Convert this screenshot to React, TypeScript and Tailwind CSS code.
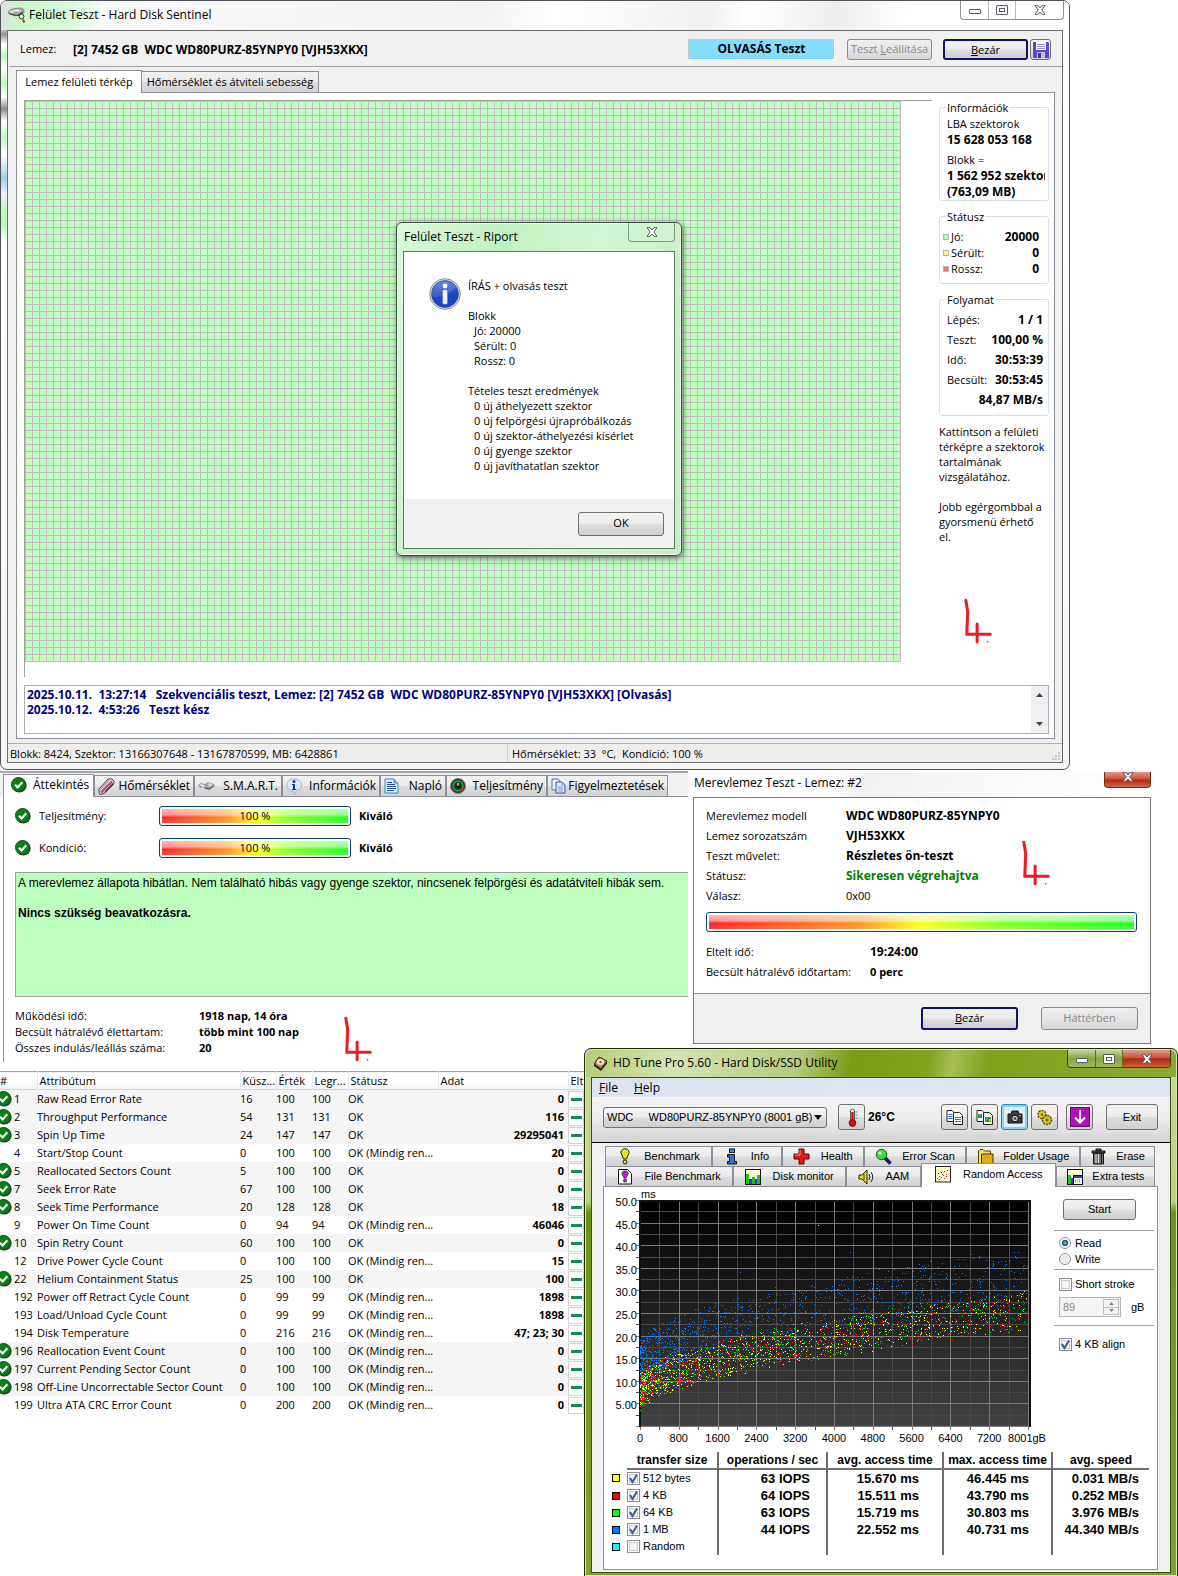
import { useState } from 'react';
import type { ReactNode } from 'react';

const face = 'border border-[#707070] rounded-[3px] bg-[linear-gradient(#f3f3f3,#ebebeb_48%,#dddddd_52%,#cfcfcf)]';
const defaultFace = 'border-2 border-[#10106e] rounded-[3px] bg-[linear-gradient(#f3f3f3,#ebebeb_48%,#dddddd_52%,#cfcfcf)]';
const disabledFace = 'border border-[#8a8a8a] rounded-[3px] bg-[linear-gradient(#f0f0f0,#e4e4e4_50%,#d6d6d6)] text-[#8a8a8a]';
const tabFace = 'border border-[#8c8e99] bg-[linear-gradient(#f2f2f2,#ebebeb_48%,#dddddd_52%,#d2d2d2)]';

/* ---------- icons ---------- */

const CheckIcon = () => (
    <svg className="w-[16px] h-[16px] shrink-0" viewBox="0 0 17 17">
        <circle cx="9" cy="9" r="7.6" fill="#3a3a3a" />
        <circle cx="8" cy="8" r="7.5" fill="#0a8018" stroke="#064d0c" strokeWidth="1" />
        <path d="M4.2 8.2l2.8 3 5-5.6" fill="none" stroke="#fff" strokeWidth="2.2" />
    </svg>
);

const DriveIcon = () => (
    <svg className="w-[18px] h-[16px] shrink-0" viewBox="0 0 18 16">
        <path d="M0 5l2-2 4-1.500 7-.5 3 1.500v3L12 8l-5 1-3-1.500L1 7z" fill="#a8a8a8" stroke="#666" strokeWidth="0.600" />
        <path d="M1 6l4 1 4 1 6-3.500V6l-4 3H7L2 7.500z" fill="#4c4c4c" />
        <ellipse cx="9" cy="3.600" rx="4" ry="1.500" fill="#f0f0f0" stroke="#888" strokeWidth="0.500" />
        <ellipse cx="4" cy="4.800" rx="2.500" ry="1.200" fill="#dedede" />
        <circle cx="13.500" cy="9.500" r="2.400" fill="#dfeaf2" stroke="#333" />
        <path d="M14.500 11.500l1.500 3.500" stroke="#b27a22" strokeWidth="2.200" />
        <path d="M16 14v1.500" stroke="#222" strokeWidth="1.500" />
    </svg>
);

const TabDriveIcon = () => (
    <svg className="w-[17px] h-[10px] shrink-0" viewBox="0 0 17 10">
        <path d="M0 4l3-2 4 1 3-2 6 2 1 2-5 4-5-1-2-2-3 1z" fill="#9c9c9c" />
        <path d="M1 4l2-1 3 1 2 1-3 1z" fill="#e8e8e8" />
        <path d="M9 3l3-1 3 2-3 2z" fill="#dcdcdc" />
        <path d="M7 7l4 1 4-3" stroke="#555" fill="none" />
    </svg>
);

const ThermoTabIcon = () => (
    <svg className="w-[17px] h-[17px] shrink-0" viewBox="0 0 17 17">
        <path d="M1 11L10 1h4l2 2v3L7 15l-5 1.500-1-2z" fill="#d8d8dc" stroke="#444" strokeWidth="1" />
        <path d="M3 14.500L14 3.500" stroke="#d0408a" strokeWidth="2.400" />
        <path d="M7 14l8-8.500" stroke="#55404c" strokeWidth="1.200" />
        <path d="M2.500 11.500L11 2.500" stroke="#8a8a90" strokeWidth="1" />
    </svg>
);

const InfoBubbleIcon = () => (
    <svg className="w-[17px] h-[17px] shrink-0" viewBox="0 0 17 17">
        <path d="M8 1c4.500 0 7.500 2.500 7.500 6 0 3-2 4.700-4.500 5.300L8.500 16 7 12.800C3 12.500.8 10 .8 7 .8 3.500 3.700 1 8 1z" fill="#dcebf7" stroke="#9db6cc" />
        <circle cx="8" cy="3.600" r="1.500" fill="#1238a8" />
        <path d="M6 6h3v5h1.200v1H6v-1h1V7H6z" fill="#1238a8" />
    </svg>
);

const LogIcon = () => (
    <svg className="w-[15px] h-[16px] shrink-0" viewBox="0 0 15 16">
        <path d="M1 1h9l4 4v10H1z" fill="#d9efff" stroke="#2b8be0" />
        <path d="M10 1v4h4" fill="#7cc0f5" stroke="#2b8be0" />
        <path d="M3 4.500h5M3 6.500h8M3 8.500h9M3 10.500h9M3 12.500h7" stroke="#23509c" />
    </svg>
);

const GaugeIcon = () => (
    <svg className="w-[16px] h-[16px] shrink-0" viewBox="0 0 16 16">
        <circle cx="8" cy="8" r="7.500" fill="#333" stroke="#7b7b7b" />
        <circle cx="8" cy="8" r="4.800" fill="#0d3d14" stroke="#1fae3a" strokeWidth="1.600" />
        <path d="M8 10V5" stroke="#fff" strokeWidth="1.200" />
        <circle cx="8" cy="9" r="1.600" fill="#000" />
        <path d="M10 12l4-3-1.500 4z" fill="#f22" />
    </svg>
);

const PagesIcon = () => (
    <svg className="w-[15px] h-[16px] shrink-0" viewBox="0 0 15 16">
        <path d="M1 1h6l2 2v9H1z" fill="#eaf2ff" stroke="#5a6fa5" />
        <path d="M5 4h6l3 3v8H5z" fill="#dbe9ff" stroke="#3f5698" />
        <path d="M11 4v3h3M7 9h5M7 11h5M7 13h5" fill="none" stroke="#7da0e0" />
    </svg>
);

const FloppyIcon = () => (
    <svg className="w-[16px] h-[16px] shrink-0" viewBox="0 0 16 16">
        <path d="M0 0h15l1 1v15H1l-1-1z" fill="#5b48c8" />
        <path d="M3 0h10v8H3z" fill="#fff" />
        <path d="M4 2.500h8M4 4.500h8M4 6.500h8" stroke="#9b92d8" />
        <path d="M4 10h8v6H4z" fill="#c3bdea" />
        <path d="M5 11h3v5H5z" fill="#4331a5" />
    </svg>
);

const InfoIcon = () => (
    <svg className="w-[32px] h-[32px] shrink-0" viewBox="0 0 32 32">
        <defs>
            <linearGradient id="infoBlue" x1="0" y1="0" x2="0" y2="1">
                <stop offset="0" stopColor="#4a78dc" />
                <stop offset="0.5" stopColor="#1d45bb" />
                <stop offset="1" stopColor="#1848d2" />
            </linearGradient>
        </defs>
        <circle cx="16" cy="16" r="15.300" fill="#e4e4e4" stroke="#8b8b8b" />
        <circle cx="16" cy="16" r="13.500" fill="url(#infoBlue)" stroke="#24408f" strokeWidth="0.600" />
        <path d="M2.800 18C8 20 20 18 27 9A13.500 13.500 0 0 0 2.800 18z" fill="#fff" opacity="0.150" />
        <circle cx="16" cy="8" r="2.400" fill="#fff" />
        <rect x="13.800" y="12" width="4.400" height="14" rx="1" fill="#f2f2f2" stroke="#bbb" strokeWidth="0.500" />
    </svg>
);

const TuneLogo = () => (
    <svg className="w-[15px] h-[15px] shrink-0" viewBox="0 0 15 15">
        <path d="M1 8L6 1l8 4-6 8z" fill="#b98250" stroke="#3a2a1c" />
        <path d="M1 8l7 5 6-8v2.500L8 15 1 10z" fill="#2a2320" />
        <ellipse cx="7.500" cy="6" rx="3.600" ry="3" fill="#f4e3cf" />
        <circle cx="7.500" cy="6" r="1.200" fill="#8a5a2c" />
    </svg>
);

const CloseGlyph = ({ fill = '#fff' }: { fill?: string }) => (
    <svg className="w-[12px] h-[10px]" viewBox="0 0 12 10">
        <path d="M1 .7h3L6 3 8 .7h3L7.800 5 11 9.300H8L6 7 4 9.300H1L4.200 5z" fill={fill} stroke="#555b66" strokeWidth="1" />
    </svg>
);

const MinGlyph = () => (
    <svg className="w-[12px] h-[6px] mt-[4px]" viewBox="0 0 12 6"><rect x="0.500" y="0.500" width="11" height="4" rx="0.500" fill="#fff" stroke="#555b66" /></svg>
);

const MaxGlyph = () => (
    <svg className="w-[12px] h-[10px]" viewBox="0 0 12 10">
        <rect x="0.500" y="0.500" width="11" height="9" rx="0.500" fill="#fff" stroke="#555b66" />
        <rect x="3.500" y="3.500" width="5" height="3" fill="#fff" stroke="#555b66" />
    </svg>
);

const BulbIcon = () => (
    <svg className="w-[16px] h-[17px]" viewBox="0 0 16 17">
        <path d="M8 .7c2.500 0 4 1.500 4 3.500S10 9 9.500 11h-3C6 9 4 6.200 4 4.200S5.500.7 8 .7z" fill="#e6e21c" stroke="#222" />
        <path d="M6.500 3.500l1-1" stroke="#fff" />
        <circle cx="8" cy="14" r="2" fill="#e6e21c" stroke="#222" />
    </svg>
);

const LetterIIcon = () => (
    <svg className="w-[14px] h-[17px]" viewBox="0 0 14 17">
        <rect x="4.500" y="1" width="5" height="3.500" fill="#2f8be6" stroke="#111" />
        <path d="M2.500 6.500h7v7h2v2.500h-9v-2.500h2v-4.500h-2z" fill="#1e7ae0" stroke="#111" />
    </svg>
);

const CrossIcon = () => (
    <svg className="w-[17px] h-[17px]" viewBox="0 0 17 17">
        <path d="M6 1h5v5h5v5h-5v5H6v-5H1V6h5z" fill="#e01818" stroke="#5c0505" />
        <path d="M7 2v5H2" stroke="#ff8a8a" fill="none" />
    </svg>
);

const LensIcon = () => (
    <svg className="w-[17px] h-[17px]" viewBox="0 0 17 17">
        <path d="M9.500 9.500l6 6" stroke="#0a1270" strokeWidth="3.500" />
        <circle cx="6.500" cy="6.500" r="5.200" fill="#3fdc3f" stroke="#155c15" />
        <circle cx="5" cy="5" r="1.500" fill="#d8ffd8" />
    </svg>
);

const FolderIcon = () => (
    <svg className="w-[17px] h-[17px]" viewBox="0 0 17 17">
        <path d="M1.500 3V15.500h12V3h-6L6 1.500H3z" fill="#f5e169" stroke="#4a3c05" />
        <path d="M4.500 6h11.500v9.500H4.500z" fill="#dcae1a" stroke="#4a3c05" />
    </svg>
);

const TrashIcon = () => (
    <svg className="w-[17px] h-[17px]" viewBox="0 0 17 17">
        <path d="M2 3h13v2H2zM6 1h5v2H6zM3.500 5h10v11h-10z" fill="#6f6f6f" stroke="#111" />
        <path d="M6 6v9M8.500 6v9" stroke="#ddd" /><path d="M11.500 6v9" stroke="#222" />
    </svg>
);

const FileBulbIcon = () => (
    <svg className="w-[16px] h-[17px]" viewBox="0 0 16 17">
        <path d="M1.500 1.500h9l4 4v10.500h-13z" fill="#fff" stroke="#111" />
        <path d="M8 3c2 0 3 1 3 2.500S9.500 8.500 9 10H7C6.500 8.500 5 7 5 5.500S6 3 8 3z" fill="#c020d0" stroke="#222" strokeWidth="0.800" />
        <circle cx="8" cy="12.500" r="1.600" fill="#c020d0" stroke="#222" strokeWidth="0.800" />
    </svg>
);

const BarsIcon = () => (
    <svg className="w-[16px] h-[16px]" viewBox="0 0 16 16">
        <rect x="0.500" y="0.500" width="15" height="15" fill="#ffffd6" stroke="#111" />
        <path d="M1 5h3v10H1zM7 8h3v7H7zM12 6h3v9h-3z" fill="#18c818" />
        <path d="M4 10h3v5H4zM10 10h2v5h-2z" fill="#3030e8" />
    </svg>
);

const SpeakerIcon = () => (
    <svg className="w-[17px] h-[16px]" viewBox="0 0 17 16">
        <path d="M1 6h3l5-5v14L4 10H1z" fill="#efd92c" stroke="#222" />
        <path d="M11 5q2 3 0 6M13 3q3.500 5 0 10" fill="none" stroke="#222" />
        <path d="M6 5v6" stroke="#a08a10" strokeWidth="2" />
    </svg>
);

const ScatterIcon = () => (
    <svg className="w-[16px] h-[17px]" viewBox="0 0 16 17">
        <rect x="0.500" y="0.500" width="15" height="15.500" fill="#ffffc0" stroke="#222" />
        <path d="M2 12h1v1H2zM4 10h1v1H4zM6 11h1v1H6zM4 13h1v1H4zM8 9h1v1H8zM9 12h1v1H9zM11 8h1v1h-1z" fill="#e02020" />
        <path d="M3 7h1v1H3zM6 6h1v1H6zM9 5h1v1H9zM12 4h1v1h-1zM11 10h1v1h-1zM7 8h1v1H7z" fill="#2030d0" />
    </svg>
);

const ExtraIcon = () => (
    <svg className="w-[16px] h-[16px]" viewBox="0 0 16 16">
        <rect x="0.500" y="0.500" width="15" height="15" fill="#ffffd6" stroke="#111" />
        <path d="M1 6h3v9H1z" fill="#18c818" /><path d="M4 9h2v6H4z" fill="#3030e8" />
        <rect x="6.500" y="6.500" width="9" height="9" fill="#fff" stroke="#111" />
        <path d="M7 7h8v2H7z" fill="#2440b0" />
        <path d="M8 11h6M8 13h6" stroke="#c33" strokeDasharray="1 1" />
    </svg>
);

const ThermometerIcon = () => (
    <svg className="w-[14px] h-[19px]" viewBox="0 0 14 19">
        <rect x="5.500" y="1" width="4" height="12" rx="2" fill="#fff" stroke="#555" />
        <path d="M7.500 4v10" stroke="#d00f0f" strokeWidth="2.500" />
        <circle cx="7.500" cy="15" r="3.400" fill="#d00f0f" stroke="#5c0505" strokeWidth="0.800" />
        <path d="M10.500 4h2M10.500 7h2M10.500 10h2" stroke="#2a8a8a" />
    </svg>
);

const CopyIcon = ({ picture }: { picture?: boolean }) => (
    <svg className="w-[17px] h-[17px]" viewBox="0 0 17 17">
        <path d="M1 1.500h5l2 2v9H1z" fill="#fff" stroke="#222" />
        <path d="M7.500 3.500h6l3 3v9h-9z" fill="#fff" stroke="#222" />
        {picture ? (
            <>
                <path d="M2 5h4v4H2zM9 8h6v5H9z" fill="#19a22b" />
                <path d="M3 5h2v2H3zM10 9h2v2h-2z" fill="#24b8e8" />
                <path d="M13 10h2v2h-2z" fill="#e6c61c" />
            </>
        ) : (
            <path d="M2.500 5.500h4M2.500 7.500h4M2.500 9.500h4M9 8.500h6M9 10.500h6M9 12.500h6" stroke="#2a6fd8" />
        )}
    </svg>
);

const CameraIcon = () => (
    <svg className="w-[16px] h-[14px]" viewBox="0 0 16 14">
        <path d="M1 4h3l1-3h6l1 3h3v9H1z" fill="#3c3c3c" stroke="#111" />
        <circle cx="8" cy="8.500" r="3.300" fill="#cfcfcf" stroke="#111" />
        <circle cx="8" cy="8.500" r="1.500" fill="#555" />
        <path d="M12 5h2v1h-2z" fill="#3fdc3f" />
    </svg>
);

const GearsIcon = () => (
    <svg className="w-[17px] h-[17px]" viewBox="0 0 17 17">
        <circle cx="6" cy="5.500" r="4" fill="#e6d020" stroke="#5c5005" strokeWidth="1.500" strokeDasharray="2 1" />
        <circle cx="11" cy="11" r="4.500" fill="#d8c018" stroke="#5c5005" strokeWidth="1.500" strokeDasharray="2 1" />
        <circle cx="6" cy="5.500" r="1.200" fill="#6d6208" /><circle cx="11" cy="11" r="1.400" fill="#6d6208" />
    </svg>
);

const DownloadIcon = () => (
    <svg className="w-[20px] h-[20px]" viewBox="0 0 20 20">
        <rect x="0.500" y="0.500" width="19" height="19" fill="#b010b8" stroke="#6a0870" />
        <path d="M10 3v12M5 10.500l5 5 5-5" fill="none" stroke="#fff" strokeWidth="2" />
    </svg>
);

/* hand-drawn mark */
const RedFour = () => (
    <svg className="w-[32px] h-[48px]" viewBox="0 0 34 50" fill="none" stroke="#ed1c24" strokeWidth="3.200" strokeLinecap="round" strokeLinejoin="round">
        <path d="M3 2l2 12-1 24 25 0" />
        <path d="M15 27v19" />
        <path d="M26 46h.3" strokeWidth="1.500" />
    </svg>
);

/* ---------- shared parts ---------- */

const GradientBar = ({ value, label }: { value?: string; label: string }) => (
    <div role="progressbar" aria-label={label} aria-valuenow={100} className="h-[20px] w-full border border-[#0b3f7d] rounded-[3px] bg-white p-[2px]">
        <div className="h-full flex items-center justify-center bg-[linear-gradient(to_bottom,rgba(255,255,255,0.65),rgba(255,255,255,0.5)_40%,rgba(255,255,255,0)_60%,rgba(255,255,255,0.15)),linear-gradient(to_right,#ff2424,#ff9224_35%,#ffff24_50%,#86ff24_68%,#24ff24)]">
            {value}
        </div>
    </div>
);

const Check = ({ defaultChecked, children }: { defaultChecked?: boolean; children: ReactNode }) => (
    <label className="flex items-center gap-[3px] h-[16px]">
        <span className="relative w-[13px] h-[13px]">
            <input type="checkbox" defaultChecked={defaultChecked} className="peer block appearance-none w-[13px] h-[13px] border border-[#8e8f8f] bg-[#f4f4f4] shadow-[inset_0_0_0_1px_#fff,inset_0_0_0_2px_#c8cccf]" />
            <svg className="absolute inset-0 w-[13px] h-[13px] hidden peer-checked:block pointer-events-none" viewBox="0 0 13 13">
                <path d="M3 6l2.500 4L10 2.500" fill="none" stroke="#3b5a9c" strokeWidth="2" />
            </svg>
        </span>
        {children}
    </label>
);

const Radio = ({ label, defaultChecked }: { label: string; defaultChecked?: boolean }) => (
    <label className="flex items-center gap-[4px] h-[16px] pl-[5px]">
        <input
            type="radio"
            name="mode"
            defaultChecked={defaultChecked}
            className="appearance-none w-[12px] h-[12px] rounded-full border border-[#8e8f8f] bg-[#ececec] shadow-[inset_0_0_0_1px_#fff] checked:bg-[radial-gradient(#5cc0ea,#17506f_40%,#f4f4f4_50%)]"
        />
        {label}
    </label>
);

/* ---------- surface test window ---------- */

const InfoRow = ({ label, value, swatch }: { label: string; value: string; swatch?: string }) => (
    <div className="flex items-center leading-[16px]">
        {swatch && <i className={`w-[6px] h-[6px] border border-[#b8b0b8] mr-[2px] ${swatch}`} />}
        <span>{label}</span>
        <b className="ml-auto text-[12px]">{value}</b>
    </div>
);

const SurfaceSidebar = () => (
    <aside className="w-[110px] shrink-0 leading-[15px]">
        <fieldset className="min-w-0 border border-[#d5dfe5] rounded-[3px] pl-[7px] pr-[3px] pt-px overflow-hidden whitespace-nowrap">
            <legend className="-ml-px px-px">Információk</legend>
            <div className="overflow-hidden leading-[16px]">
                <p>LBA szektorok</p>
                <p className="font-bold text-[12px]">15 628 053 168</p>
                <p className="mt-1">Blokk =</p>
                <p className="font-bold text-[12px]">1 562 952 szektor</p>
                <p className="font-bold text-[12px]">(763,09 MB)</p>
            </div>
        </fieldset>
        <fieldset className="mt-2 border border-[#d5dfe5] rounded-[3px] pl-[3px] pr-[9px] pt-[5px] pb-[6px]">
            <legend className="ml-[3px] px-px">Státusz</legend>
            <InfoRow label="Jó:" value="20000" swatch="bg-[#b4ffb4]" />
            <InfoRow label="Sérült:" value="0" swatch="bg-[#ffff6e]" />
            <InfoRow label="Rossz:" value="0" swatch="bg-[#ff6e6e]" />
        </fieldset>
        <fieldset className="mt-2 border border-[#d5dfe5] rounded-[3px] pl-[7px] pr-[5px] pt-[5px] pb-[7px]">
            <legend className="-ml-px px-px">Folyamat</legend>
            <div className="flex flex-col gap-1">
                <InfoRow label="Lépés:" value="1 / 1" />
                <InfoRow label="Teszt:" value="100,00 %" />
                <InfoRow label="Idő:" value="30:53:39" />
                <InfoRow label="Becsült:" value="30:53:45" />
                <InfoRow label="" value="84,87 MB/s" />
            </div>
        </fieldset>
        <p className="mt-2">Kattintson a felületi térképre a szektorok tartalmának vizsgálatához.</p>
        <p className="mt-[15px]">Jobb egérgombbal a gyorsmenü érhető<br />el.</p>
        <div className="mt-[54px] ml-[24px]"><RedFour /></div>
    </aside>
);

const ReportDialog = () => (
    <div role="dialog" aria-label="Felület Teszt - Riport" className="absolute left-[371px] top-[121px] w-[286px] border border-[#3f5545] rounded-[6px] bg-[linear-gradient(100deg,#dcf8dc,#bff0bf_30%,#d3f6d3_60%,#c2efc2)] shadow-[1px_2px_6px_rgba(0,0,0,0.55),inset_0_0_0_1px_#e8fbe8] px-[6px] pb-[6px]">
        <div className="h-[28px] flex items-start justify-between pl-px">
            <h2 className="leading-[28px] text-[12px]">Felület Teszt - Riport</h2>
            <button type="button" aria-label="Bezárás" className="w-[47px] h-[19px] border border-t-0 border-[#7d9a80] rounded-b-[4px] flex items-center justify-center bg-[#d0f3d0]">
                <CloseGlyph />
            </button>
        </div>
        <div className="border border-[#5f7a63] bg-white">
            <div className="flex gap-[7px] pl-[25px] pt-[26px] h-[247px]">
                <InfoIcon />
                <div className="leading-[15px] whitespace-pre">
                    <p>ÍRÁS + olvasás teszt</p>
                    <p className="mt-[15px]">Blokk</p>
                    <ul className="pl-[6px]">
                        <li>Jó: 20000</li>
                        <li>Sérült: 0</li>
                        <li>Rossz: 0</li>
                    </ul>
                    <p className="mt-[15px]">Tételes teszt eredmények</p>
                    <ul className="pl-[6px]">
                        <li>0 új áthelyezett szektor</li>
                        <li>0 új felpörgési újrapróbálkozás</li>
                        <li>0 új szektor-áthelyezési kísérlet</li>
                        <li>0 új gyenge szektor</li>
                        <li>0 új javíthatatlan szektor</li>
                    </ul>
                </div>
            </div>
            <div className="h-[49px] bg-[#f0f0f0] flex items-center justify-end pr-[10px]">
                <button type="button" className={`w-[86px] h-[24px] ${face}`}>OK</button>
            </div>
        </div>
    </div>
);

const SurfaceWindow = () => (
    <section className="mr-[108px] border border-[#4f5257] rounded-[7px] bg-[linear-gradient(#f4f4f4,#fff_3%,#f6f6f6)] overflow-hidden">
        <div className="bg-[linear-gradient(#fff,#ddd_10%,#9a9a9a_14%,#fff_18%,#c0f8c0_23%,#fff_28%,#c0f8c0_34%,#fff_40%,#8a8a8a_45%,#fff_50%,#c0f8c0_57%,#fff_64%,#9fd0e4_74%,#eef_80%,#c0f8c0_88%,#c0f8c0_94%,#fff)] bg-no-repeat bg-[length:6px_240px]">
            <div className="h-[29px] flex items-start justify-between pl-[7px] pr-[5px] bg-[linear-gradient(100deg,#e0e0e0,#c9f7c9_2%,#ddf8dd_7%,#fafafa_10%,#f2f2f2_45%,#fff_52%,#f0f0f0_66%,#fff_70%,#ededed_78%,#fff_85%)]">
                <h1 className="flex items-center gap-[3px] h-[28px] text-[12px]"><DriveIcon />Felület Teszt - Hard Disk Sentinel</h1>
                <div className="flex h-[19px] border border-t-0 border-[#8d8f94] rounded-b-[4px]">
                    <button type="button" aria-label="Kis méret" className="w-[28px] flex items-center justify-center border-r border-[#b5b7bb]"><MinGlyph /></button>
                    <button type="button" aria-label="Teljes méret" className="w-[27px] flex items-center justify-center border-r border-[#b5b7bb]"><MaxGlyph /></button>
                    <button type="button" aria-label="Bezárás" className="w-[47px] flex items-center justify-center"><CloseGlyph /></button>
                </div>
            </div>
            <div className="mx-[6px] mb-[6px] border border-[#6a6a6a] bg-[#f0f0f0]">
                <div className="h-[35px] flex items-center pt-[2px] pl-3 pr-[11px]">
                    <span className="w-[53px]">Lemez:</span>
                    <b className="whitespace-pre text-[12px]">[2] 7452 GB  WDC WD80PURZ-85YNPY0 [VJH53XKX]</b>
                    <b className="ml-auto w-[147px] h-[21px] leading-[18px] text-center text-[12px] bg-[#84dcff] border border-[#c8c8c8] border-r-white border-b-white">OLVASÁS Teszt</b>
                    <button type="button" disabled className={`ml-3 w-[85px] h-[21px] whitespace-nowrap ${disabledFace}`}>Teszt <u>L</u>eállítása</button>
                    <button type="button" className={`ml-[11px] w-[85px] h-[21px] ${defaultFace} leading-[15px]`}><u>B</u>ezár</button>
                    <button type="button" aria-label="Mentés" className={`ml-[2px] w-[21px] h-[21px] flex items-center justify-center ${face}`}><FloppyIcon /></button>
                </div>
                <div className="ml-[2px] border-t border-[#a0a0a0]" />
                <div role="tablist" className="h-[25px] flex items-end pl-2">
                    <button type="button" role="tab" aria-selected="true" className="relative z-10 w-[126px] h-[23px] -mb-px border border-b-0 border-[#8c8e99] bg-white">Lemez felületi térkép</button>
                    <button type="button" role="tab" className={`-ml-px w-[178px] h-[21px] border-b-0 whitespace-nowrap ${tabFace}`}>Hőmérséklet és átviteli sebesség</button>
                </div>
                <div className="ml-2 mr-[7px] border border-[#8c8e99] bg-white pt-[7px] pl-[7px] pr-[5px] pb-1">
                    <div className="flex gap-[7px]">
                        <div className="relative flex-1 h-[577px] border-t border-l border-[#a0a0a0]">
                            <div className="w-[876px] max-w-full h-[561px] bg-[#bdffbd] bg-[linear-gradient(to_right,#c6b6c6_1px,transparent_1px),linear-gradient(to_bottom,#c6b6c6_1px,transparent_1px)] bg-[length:7px_7px]" />
                            <ReportDialog />
                        </div>
                        <SurfaceSidebar />
                    </div>
                    <div className="mt-2 h-[49px] flex border border-[#abadb3]">
                        <div role="log" className="flex-1 px-[2px] pt-px text-[12px] leading-[15px] font-bold text-[#000080] whitespace-pre">
                            <p>2025.10.11.  13:27:14   Szekvenciális teszt, Lemez: [2] 7452 GB  WDC WD80PURZ-85YNPY0 [VJH53XKX] [Olvasás]</p>
                            <p>2025.10.12.  4:53:26   Teszt kész</p>
                        </div>
                        <div className="w-[17px] bg-[#f0f0f0] flex flex-col items-center justify-between py-[7px]">
                            <svg className="w-[7px] h-[4px]" viewBox="0 0 7 4"><path d="M0 4l3.500-4L7 4z" fill="#444" /></svg>
                            <svg className="w-[7px] h-[4px]" viewBox="0 0 7 4"><path d="M0 0l3.500 4L7 0z" fill="#444" /></svg>
                        </div>
                    </div>
                </div>
                <footer className="mt-1 h-[19px] flex border-t border-[#b0b0b0] bg-[#f0eded] leading-[19px] whitespace-pre">
                    <span className="w-[500px] pl-[2px] border-r border-[#cfcfcf]">Blokk: 8424, Szektor: 13166307648 - 13167870599, MB: 6428861</span>
                    <span className="pl-1">Hőmérséklet: 33  °C,  Kondíció: 100 %</span>
                    <svg className="ml-auto mt-[6px] w-[12px] h-[12px]" viewBox="0 0 12 12"><path d="M8 2h2v2H8zM8 5h2v2H8zM8 8h2v2H8zM5 5h2v2H5zM5 8h2v2H5zM2 8h2v2H2z" fill="#c4c4c4" /></svg>
                </footer>
            </div>
        </div>
    </section>
);

/* ---------- overview ---------- */

const overviewTabs = [
    { label: 'Hőmérséklet', icon: <ThermoTabIcon />, width: 'w-[100px]' },
    { label: 'S.M.A.R.T.', icon: <TabDriveIcon />, width: 'w-[88px]' },
    { label: 'Információk', icon: <InfoBubbleIcon />, width: 'w-[98px]' },
    { label: 'Napló', icon: <LogIcon />, width: 'w-[66px]' },
    { label: 'Teljesítmény', icon: <GaugeIcon />, width: 'w-[101px]' },
    { label: 'Figyelmeztetések', icon: <PagesIcon />, width: 'w-[121px]' },
];

const HealthRow = ({ label }: { label: string }) => (
    <div className="flex items-center h-[20px] pl-[11px]">
        <CheckIcon />
        <span className="ml-2 w-[120px]">{label}</span>
        <div className="w-[192px]"><GradientBar value="100 %" label={label} /></div>
        <b className="ml-2">Kiváló</b>
    </div>
);

const Overview = () => (
    <section className="flex-1 min-w-0 mt-px border-t-2 border-[#a5a7ad]">
        <div role="tablist" className="h-[23px] flex items-end pl-[3px] bg-[#f0f0f0] text-[12px]">
            <button type="button" role="tab" aria-selected="true" className="relative z-10 w-[91px] h-[23px] -mb-px flex items-center gap-[6px] pl-[7px] pb-[3px] border border-b-0 border-[#8c8e99] bg-white"><CheckIcon />Áttekintés</button>
            {overviewTabs.map(tab => (
                <button key={tab.label} type="button" role="tab" className={`h-[21px] flex items-center justify-between px-[3px] border-b-0 whitespace-nowrap ${tab.width} ${tabFace}`}>{tab.icon}{tab.label}</button>
            ))}
        </div>
        <div className="ml-[3px] border-t border-l border-[#8c8e99] pt-[9px] h-[252px]">
            <HealthRow label="Teljesítmény:" />
            <div className="mt-3"><HealthRow label="Kondíció:" /></div>
            <div className="mt-[14px] ml-[11px] h-[125px] border border-r-0 border-[#a0a0a0] bg-[#bdffbd] pl-[2px] pt-[3px] font-['Liberation_Sans',sans-serif] text-[12px] leading-[15px] whitespace-nowrap">
                <p>A merevlemez állapota hibátlan. Nem található hibás vagy gyenge szektor, nincsenek felpörgési és adatátviteli hibák sem.</p>
                <p className="mt-[15px] font-bold">Nincs szükség beavatkozásra.</p>
            </div>
            <div className="flex mt-[11px] ml-[11px]">
                <dl className="grid grid-cols-[184px_auto] leading-[16px]">
                    <dt>Működési idő:</dt><dd className="font-bold">1918 nap, 14 óra</dd>
                    <dt>Becsült hátralévő élettartam:</dt><dd className="font-bold">több mint 100 nap</dd>
                    <dt>Összes indulás/leállás száma:</dt><dd className="font-bold">20</dd>
                </dl>
                <div className="ml-[44px] mt-2 h-[32px]"><RedFour /></div>
            </div>
        </div>
    </section>
);

/* ---------- self test dialog ---------- */

const TestDialog = () => (
    <section className="w-[490px] shrink-0 pl-[5px] pr-[27px] pt-[2px]">
        <div className="h-[25px] flex justify-between bg-[linear-gradient(110deg,#fff_30%,#f1f1f1_38%,#fafafa_70%,#fff)] pl-px">
            <h2 className="text-[12px] leading-[22px]">Merevlemez Teszt - Lemez: #2</h2>
            <button type="button" aria-label="Bezárás" className="w-[47px] h-[16px] border border-t-0 border-[#6b2a20] rounded-b-[4px] flex justify-center bg-[linear-gradient(#e09a8c,#c8503c_45%,#b02a14_55%,#d4664c)]"><CloseGlyph /></button>
        </div>
        <div className="border border-[#7a7a7a] bg-white">
            <div className="h-[195px] pl-[12px] pr-[13px] pt-[8px]">
                <div className="flex h-[100px]">
                    <dl className="grid grid-cols-[140px_auto] leading-[20px]">
                        <dt>Merevlemez modell</dt><dd className="font-bold text-[12px]">WDC WD80PURZ-85YNPY0</dd>
                        <dt>Lemez sorozatszám</dt><dd className="font-bold text-[12px]">VJH53XKX</dd>
                        <dt>Teszt művelet:</dt><dd className="font-bold text-[12px]">Részletes ön-teszt</dd>
                        <dt>Státusz:</dt><dd className="font-bold text-[12px] text-[#008000]">Sikeresen végrehajtva</dd>
                        <dt>Válasz:</dt><dd>0x00</dd>
                    </dl>
                    <div className="ml-auto mr-[84px] mt-[34px]"><RedFour /></div>
                </div>
                <div className="mt-[6px]"><GradientBar label="Teszt" /></div>
                <dl className="grid grid-cols-[164px_auto] leading-[20px] mt-[10px]">
                    <dt>Eltelt idő:</dt><dd className="font-bold text-[12px]">19:24:00</dd>
                    <dt>Becsült hátralévő időtartam:</dt><dd className="font-bold">0 perc</dd>
                </dl>
            </div>
            <div className="h-[50px] flex items-center justify-end gap-[23px] pr-[12px] border-t border-[#8c8e99] bg-[#f0f0f0]">
                <button type="button" className={`w-[97px] h-[23px] ${defaultFace}`}><u>B</u>ezár</button>
                <button type="button" disabled className={`w-[97px] h-[23px] ${disabledFace}`}>Háttérben</button>
            </div>
        </div>
    </section>
);

/* ---------- S.M.A.R.T. table ---------- */

const always = 'OK (Mindig ren...';
const attributes: [number, string, number, number, string, string, boolean][] = [
    [1, 'Raw Read Error Rate', 16, 100, 'OK', '0', true],
    [2, 'Throughput Performance', 54, 131, 'OK', '116', true],
    [3, 'Spin Up Time', 24, 147, 'OK', '29295041', true],
    [4, 'Start/Stop Count', 0, 100, always, '20', false],
    [5, 'Reallocated Sectors Count', 5, 100, 'OK', '0', true],
    [7, 'Seek Error Rate', 67, 100, 'OK', '0', true],
    [8, 'Seek Time Performance', 20, 128, 'OK', '18', true],
    [9, 'Power On Time Count', 0, 94, always, '46046', false],
    [10, 'Spin Retry Count', 60, 100, 'OK', '0', true],
    [12, 'Drive Power Cycle Count', 0, 100, always, '15', false],
    [22, 'Helium Containment Status', 25, 100, 'OK', '100', true],
    [192, 'Power off Retract Cycle Count', 0, 99, always, '1898', false],
    [193, 'Load/Unload Cycle Count', 0, 99, always, '1898', false],
    [194, 'Disk Temperature', 0, 216, always, '47; 23; 30', false],
    [196, 'Reallocation Event Count', 0, 100, always, '0', true],
    [197, 'Current Pending Sector Count', 0, 100, always, '0', true],
    [198, 'Off-Line Uncorrectable Sector Count', 0, 100, always, '0', true],
    [199, 'Ultra ATA CRC Error Count', 0, 200, always, '0', false],
];

const AttributeTable = () => (
    <section className="flex-1 min-w-0 overflow-hidden">
        <div className="ml-[3px] h-[14px] border-l border-[#8c8e99]" />
        <table className="mt-[9px] w-full table-fixed border-collapse text-left whitespace-nowrap">
            <colgroup>
                <col className="w-[37px]" /><col className="w-[203px]" /><col className="w-[36px]" /><col className="w-[36px]" />
                <col className="w-[36px]" /><col className="w-[90px]" /><col /><col className="w-[16px]" />
            </colgroup>
            <thead>
                <tr className="h-[18px] leading-[16px] border-t border-t-[#a0a0a0] border-b border-b-[#d5d5d5] bg-[linear-gradient(#fff_55%,#f1f3f5)]">
                    {['#', 'Attribútum', 'Küsz...', 'Érték', 'Legr...', 'Státusz', 'Adat', 'Elt'].map((h, i) => (
                        <th key={h} className={`font-normal overflow-hidden ${i ? 'border-l border-[#e3e8ee] pl-[2px]' : ''}`}>{h}</th>
                    ))}
                </tr>
            </thead>
            <tbody>
                {attributes.map(([id, name, threshold, value, status, data, ok]) => (
                    <tr key={id} className={`h-[18px] leading-[18px] ${ok ? 'bg-[#f5f5f5]' : 'bg-white'}`}>
                        <td>
                            <div className="flex items-center gap-[2px] h-[18px]">
                                <span className="w-[12px] flex justify-end">{ok && <CheckIcon />}</span>
                                {id}
                            </div>
                        </td>
                        <td>{name}</td>
                        <td>{threshold}</td>
                        <td>{value}</td>
                        <td>{value}</td>
                        <td>{status}</td>
                        <td className="text-right font-bold pr-[4px]">{data}</td>
                        <td>
                            <div className="h-[17px] border border-[#d2d2d2] bg-white flex items-center justify-center">
                                <i className="w-[11px] h-[3px] bg-[#128a5e]" />
                            </div>
                        </td>
                    </tr>
                ))}
            </tbody>
        </table>
    </section>
);

/* ---------- HD Tune ---------- */

const PLOT = { x: 30, y: 10, w: 388, h: 226 };

// small LCG so the dots stay the same on every render
let seed = 20251012;
const random = () => {
    seed = (seed * 1664525 + 1013904223) % 4294967296;
    return seed / 4294967296;
};

const scatter = (count: number, base: number, spread: number, growth: number) => {
    let d = '';
    for (let i = 0; i < count; i++) {
        const t = Math.pow(random(), 1.7);
        const low = base + 18 * Math.pow(t, 0.58);
        const ms = low + (random() * 0.8 + random() * 0.2) * (spread + growth * t);
        const x = Math.round(PLOT.x + t * PLOT.w);
        const y = Math.round(PLOT.y + PLOT.h - (ms / 50) * PLOT.h);
        d += `M${x} ${y}h1v1h-1z`;
    }
    return d;
};

const series = [
    { color: '#1478f0', d: scatter(1150, 8, 12, 3) + 'M131 67h1v1h-1zM130 82h1v1h-1zM240 62h1v1h-1z' },
    { color: '#ffff28', d: scatter(560, 3, 9, 0) + 'M208 35h1v1h-1z' },
    { color: '#ff1414', d: scatter(500, 3, 9, 0) + 'M108 47h1v1h-1z' },
    { color: '#14e614', d: scatter(700, 3, 9, 1) },
    { color: '#ffff28', d: scatter(300, 3, 9, 1) },
    { color: '#ff1414', d: scatter(300, 3, 9, 1) },
];

const steps = [0, 1, 2, 3, 4, 5, 6, 7, 8, 9, 10];

const AccessChart = () => (
    <svg className="w-[440px] h-[258px] shrink-0 text-[11px]" viewBox="0 -2 440 258" shapeRendering="crispEdges">
        <defs>
            <linearGradient id="plot" x1="0" y1="0" x2="0" y2="1">
                <stop offset="0" stopColor="#000" />
                <stop offset="1" stopColor="#424242" />
            </linearGradient>
        </defs>
        <rect x={PLOT.x - 1} y={PLOT.y} width={PLOT.w + 3} height={PLOT.h + 1} fill="url(#plot)" />
        {steps.slice(0, 10).map(i => (
            <path key={i} stroke="#484848" d={`M${Math.round(PLOT.x + (i + 0.5) * 38.8)}.5 11v229M26 ${Math.round(PLOT.y + (i + 0.5) * 22.6)}.5h392`} />
        ))}
        {steps.map(i => (
            <path key={i} stroke="#7a7a7a" d={`M${Math.round(PLOT.x + i * 38.8)}.5 11v229M26 ${Math.round(PLOT.y + i * 22.6)}.5h392`} />
        ))}
        <path d="M29.500 10V237M29 10.500h391M420 10v227" stroke="#111" strokeWidth="2" fill="none" />
        {series.map((s, i) => <path key={i} d={s.d} fill={s.color} />)}
        <text x="31" y="8">ms</text>
        {steps.slice(0, 10).map(i => (
            <text key={i} x="27" y={16 + i * 22.6} textAnchor="end">{i === 9 ? '5.00' : `${50 - i * 5}.0`}</text>
        ))}
        {steps.map(i => (
            <text key={i} x={i === 10 ? 417 : 30 + i * 38.8} y="252" textAnchor="middle">{i === 10 ? '8001gB' : i * 800}</text>
        ))}
    </svg>
);

const tabRows = [
    [
        { label: 'Benchmark', icon: <BulbIcon />, width: 'w-[107px]' },
        { label: 'Info', icon: <LetterIIcon />, width: 'w-[70px]' },
        { label: 'Health', icon: <CrossIcon />, width: 'w-[82px]' },
        { label: 'Error Scan', icon: <LensIcon />, width: 'w-[102px]' },
        { label: 'Folder Usage', icon: <FolderIcon />, width: 'w-[114px]' },
        { label: 'Erase', icon: <TrashIcon />, width: 'w-[75px]' },
    ],
    [
        { label: 'File Benchmark', icon: <FileBulbIcon />, width: 'w-[128px]' },
        { label: 'Disk monitor', icon: <BarsIcon />, width: 'w-[113px]' },
        { label: 'AAM', icon: <SpeakerIcon />, width: 'w-[75px]' },
        { label: 'Random Access', icon: <ScatterIcon />, width: 'w-[135px]' },
        { label: 'Extra tests', icon: <ExtraIcon />, width: 'w-[99px]' },
    ],
];

const results = [
    ['512 bytes', 'bg-[#ffff00]', '63 IOPS', '15.670 ms', '46.445 ms', '0.031 MB/s'],
    ['4 KB', 'bg-[#ff0000]', '64 IOPS', '15.511 ms', '43.790 ms', '0.252 MB/s'],
    ['64 KB', 'bg-[#00ff00]', '63 IOPS', '15.719 ms', '30.803 ms', '3.976 MB/s'],
    ['1 MB', 'bg-[#0080ff]', '44 IOPS', '22.552 ms', '40.731 ms', '44.340 MB/s'],
    ['Random', 'bg-[#00ffff]', '', '', '', ''],
];

const ResultsTable = () => (
    <table className="mt-[6px] ml-[8px] w-[537px] table-fixed border-collapse whitespace-nowrap">
        <colgroup>
            <col className="w-[15px]" /><col className="w-[91px]" /><col className="w-[109px]" /><col className="w-[116px]" /><col className="w-[109px]" /><col />
        </colgroup>
        <thead>
            <tr className="h-[17px] text-[12px] leading-[15px]">
                <td />
                {['transfer size', 'operations / sec', 'avg. access time', 'max. access time', 'avg. speed'].map((h, i) => (
                    <th key={h} className={`border-b-2 border-[#6e6e6e] ${i ? 'border-l-2' : ''}`}>{h}</th>
                ))}
            </tr>
        </thead>
        <tbody>
            {results.map(([size, color, ...cells]) => (
                <tr key={size} className="h-[17px] leading-[17px]">
                    <td><i className={`block w-[8px] h-[8px] border border-black ${color}`} /></td>
                    <td><Check defaultChecked={size !== 'Random'}>{size}</Check></td>
                    {cells.map((c, i) => (
                        <td key={i} className={`border-l-2 border-[#6e6e6e] text-right text-[13px] font-bold ${i === 1 ? 'pr-[23px]' : i === 3 ? 'pr-[10px]' : i === 2 ? 'pr-[22px]' : 'pr-[16px]'}`}>{c}</td>
                    ))}
                </tr>
            ))}
        </tbody>
    </table>
);

const HdTune = () => {
    const [active, setActive] = useState('Random Access');

    return (
        <section className="w-[594px] shrink-0 border border-[#1d2a08] rounded-t-[7px] bg-[linear-gradient(#c9da98,#bdd182_29%,#6f9310_31%,#83a426)] shadow-[inset_0_0_0_1px_#dbe8b4] px-[6px] pb-[3px] font-['Liberation_Sans',sans-serif] text-[11px]">
            <div className="h-[27px] -mx-[5px] mt-px px-[5px] flex items-start justify-between rounded-t-[6px] bg-[linear-gradient(100deg,#b4cc74,#d6e3b2_15%,#b5cb7c_36%,#7d9a16_45%,#83a01e_58%,#a8bf58_62%,#819f1c_68%,#8eaa30)]">
                <h2 className="flex items-center gap-[5px] pl-[2px] h-[26px] font-['Open_Sans',sans-serif] text-[12px]"><TuneLogo />HD Tune Pro 5.60 - Hard Disk/SSD Utility</h2>
                <div className="flex h-[18px] border border-t-0 border-[#33450c] rounded-b-[4px] overflow-hidden">
                    <button type="button" aria-label="Minimize" className="w-[28px] flex items-center justify-center border-r border-[#5a701e] bg-[linear-gradient(#c8d69a,#8ba33c_50%,#a2b85c)]"><MinGlyph /></button>
                    <button type="button" aria-label="Maximize" className="w-[27px] flex items-center justify-center border-r border-[#5a701e] bg-[linear-gradient(#c8d69a,#8ba33c_50%,#a2b85c)]"><MaxGlyph /></button>
                    <button type="button" aria-label="Close" className="w-[47px] flex items-center justify-center bg-[linear-gradient(#e0a08c,#c8503c_45%,#a82c10_52%,#cf6038)]"><CloseGlyph /></button>
                </div>
            </div>
            <div className="border border-[#3c4c14] bg-[#f0f0f0]">
                <nav className="h-[19px] flex items-center gap-[16px] pl-[7px] bg-[linear-gradient(to_right,#dde3ee,#dce5f1)] font-['Open_Sans',sans-serif]">
                    <button type="button" className="text-[12px]"><u>F</u>ile</button>
                    <button type="button" className="text-[12px]"><u>H</u>elp</button>
                </nav>
                <div className="h-[46px] flex items-center pl-[11px] pr-[12px] pb-[5px] border-b border-black bg-[linear-gradient(#f4f4f4,#ececec_50%,#d2d2d2)]">
                    <div className="relative">
                        <select aria-label="Drive" className={`appearance-none w-[224px] h-[21px] pl-[3px] text-[11px] ${face}`}>
                            <option>WDC{'\u00a0\u00a0\u00a0\u00a0\u00a0'}WD80PURZ-85YNPY0 (8001 gB)</option>
                        </select>
                        <svg className="absolute right-[5px] top-[8px] w-[8px] h-[5px] pointer-events-none" viewBox="0 0 8 5"><path d="M0 0h8L4 5z" fill="#111" /></svg>
                    </div>
                    <button type="button" aria-label="Temperature" className={`ml-[11px] w-[27px] h-[26px] flex items-center justify-center ${face}`}><ThermometerIcon /></button>
                    <b className="ml-[3px] text-[12px]">26°C</b>
                    <div className="ml-auto flex gap-[3px]">
                        <button type="button" aria-label="Copy text" className={`w-[27px] h-[26px] flex items-center justify-center ${face}`}><CopyIcon /></button>
                        <button type="button" aria-label="Copy picture" className={`w-[27px] h-[26px] flex items-center justify-center ${face}`}><CopyIcon picture /></button>
                        <button type="button" aria-label="Screenshot" className="w-[27px] h-[26px] flex items-center justify-center border border-[#2b84b8] rounded-[3px] shadow-[inset_0_0_0_2px_#7fd4f7] bg-[#e4eef2]"><CameraIcon /></button>
                        <button type="button" aria-label="Options" className={`w-[27px] h-[26px] flex items-center justify-center ${face}`}><GearsIcon /></button>
                        <button type="button" aria-label="Save" className={`ml-[5px] w-[27px] h-[26px] flex items-center justify-center ${face}`}><DownloadIcon /></button>
                        <button type="button" className={`ml-[10px] w-[52px] h-[26px] ${face}`}>Exit</button>
                    </div>
                </div>
                <div className="pl-[11px] pr-[12px] pt-[3px] pb-[2px]">
                    {tabRows.map((row, r) => (
                        <div key={r} role="tablist" className="h-[20px] flex items-end pl-[2px]">
                            {row.map(tab => (
                                <button
                                    key={tab.label}
                                    type="button"
                                    role="tab"
                                    aria-selected={tab.label === active}
                                    onClick={() => setActive(tab.label)}
                                    className={`flex items-center justify-evenly whitespace-nowrap ${tab.width} ${tab.label === active ? 'relative z-10 h-[24px] -mb-px pb-[3px] bg-white border border-b-0 border-[#8c8e99]' : `h-[20px] border-b-0 ${tabFace}`}`}
                                >
                                    {tab.icon}{tab.label}
                                </button>
                            ))}
                        </div>
                    ))}
                    <div className="border border-[#8c8e99] bg-white pb-[14px]">
                        <div className="flex pt-px pl-[6px]">
                            <AccessChart />
                            <div className="flex-1 ml-[4px] mr-[3px]">
                                <button type="button" className={`mt-[11px] ml-[9px] w-[73px] h-[21px] ${face}`}>Start</button>
                                <div className="mt-[10px] border-t border-[#a0a0a0] pt-1 pb-[2px]">
                                    <Radio label="Read" defaultChecked />
                                    <Radio label="Write" />
                                </div>
                                <div className="border-t border-[#a0a0a0] pt-[6px] pl-[5px]">
                                    <Check>Short stroke</Check>
                                    <div className="mt-[5px] flex items-center gap-[10px]">
                                        <div className="w-[62px] h-[20px] flex border border-[#b5b5b5] bg-[#f4f4f4]">
                                            <input aria-label="Short stroke size" disabled defaultValue="89" className="w-[42px] pl-[3px] text-[#8a8a8a]" />
                                            <div className="flex-1 m-px border border-[#bdbdbd] flex flex-col items-center justify-evenly">
                                                <svg className="w-[5px] h-[3px]" viewBox="0 0 5 3"><path d="M0 3l2.500-3L5 3z" fill="#888" /></svg>
                                                <i className="w-full border-t border-[#bdbdbd]" />
                                                <svg className="w-[5px] h-[3px]" viewBox="0 0 5 3"><path d="M0 0l2.500 3L5 0z" fill="#888" /></svg>
                                            </div>
                                        </div>
                                        gB
                                    </div>
                                </div>
                                <div className="mt-[8px] border-t border-[#a0a0a0] pt-[10px] pl-[5px]">
                                    <Check defaultChecked>4 KB align</Check>
                                </div>
                            </div>
                        </div>
                        <ResultsTable />
                    </div>
                </div>
            </div>
        </section>
    );
};

export default function App() {
    return (
        <main className="bg-white text-black font-['Open_Sans','Noto_Sans',sans-serif] text-[11px] overflow-hidden">
            <SurfaceWindow />
            <div className="flex">
                <Overview />
                <TestDialog />
            </div>
            <div className="flex items-start">
                <AttributeTable />
                <HdTune />
            </div>
        </main>
    );
}
